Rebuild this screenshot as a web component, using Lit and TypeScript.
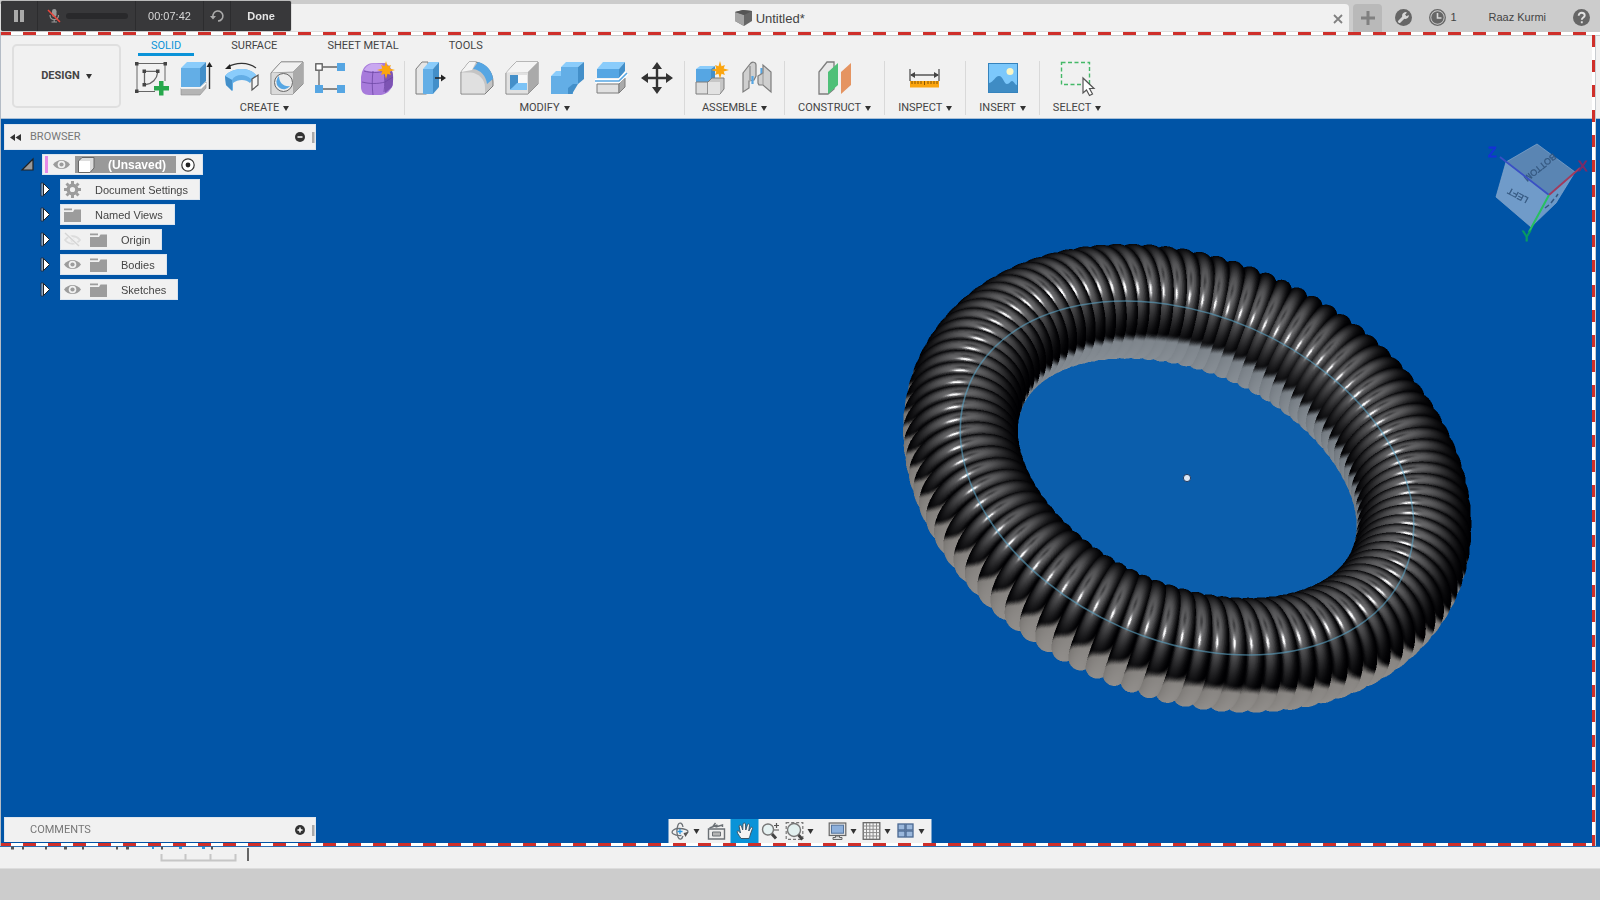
import { LitElement, html, css, svg } from "lit";
import { customElement } from "lit/decorators.js";
import { classMap } from "lit/directives/class-map.js";

const TILT_COS = 0.688;
const TILT_SIN = 0.726;
const AXIS = (23.6 * Math.PI) / 180;
const RING_RADIUS = 237;
const SCENE_W = 600;
const SCENE_H = 500;

const smooth = (lo: number, hi: number, v: number) => {
  const t = Math.min(1, Math.max(0, (v - lo) / (hi - lo)));
  return t * t * (3 - 2 * t);
};

/* A helical coil swept round a circle, drawn with a depth buffer. */
@customElement("coil-model")
export class CoilModel extends LitElement {
  static styles = css`
    :host { display: block; position: relative; width: 600px; height: 500px; }
    canvas { display: block; width: 100%; height: 100%; }
    svg { position: absolute; inset: 0; width: 100%; height: 100%; }
    .disc { z-index: -1; }
  `;

  firstUpdated() {
    const canvas = this.renderRoot.querySelector("canvas") as HTMLCanvasElement;
    const ctx = canvas.getContext("2d")!;
    const SS = 2;
    const W = SCENE_W * SS;
    const H = SCENE_H * SS;
    const depth = new Float32Array(W * H).fill(-1e9);
    const rgb = new Uint8ClampedArray(W * H * 3);
    const ux = Math.cos(AXIS), uy = Math.sin(AXIS);
    const mx = -Math.sin(AXIS), my = Math.cos(AXIS);
    const vx = TILT_COS * mx, vy = TILT_COS * my, vz = TILT_SIN;
    const nx = -TILT_SIN * mx, ny = -TILT_SIN * my, nz = TILT_COS;
    const TURNS = 94, PHI = 520, PSI = 90;
    const total = TURNS * PHI;
    for (let i = 0; i < total; i++) {
      const tau = (i / total) * 2 * Math.PI;
      const phi = ((i % PHI) / PHI) * 2 * Math.PI;
      const th = tau + 0.04 * Math.sin(tau - Math.PI / 2);
      const c = Math.cos(th), s = Math.sin(th);
      const ex = c * ux + s * vx, ey = c * uy + s * vy, ez = s * vz;
      const tx = -s * ux + c * vx, ty = -s * uy + c * vy, tz = c * vz;
      const cp = Math.cos(phi), sp = Math.sin(phi);
      const wx = cp * ex + sp * nx, wy = cp * ey + sp * ny, wz = cp * ez + sp * nz;
      const wire = 10.4 * (1 + 0.04 * s);
      const tube = 57 - wire;
      const px = RING_RADIUS * ex + tube * wx;
      const py = RING_RADIUS * ey + tube * wy;
      const pz = RING_RADIUS * ez + tube * wz;
      for (let j = 0; j < PSI; j++) {
        const psi = (j / PSI) * 2 * Math.PI;
        const a = Math.cos(psi), b = Math.sin(psi);
        if (a < -0.2) continue;
        const qz = a * wz + b * tz;
        if (qz <= -0.02) continue;
        const qx = a * wx + b * tx, qy = a * wy + b * ty;
        const X = Math.floor((px + wire * qx + SCENE_W / 2) * SS);
        const Y = Math.floor((py + wire * qy + SCENE_H / 2) * SS);
        const Z = pz + wire * qz;
        if (X < 0 || Y < 0 || X >= W - 1 || Y >= H - 1) continue;
        const p0 = Y * W + X;
        if (Z <= depth[p0] && Z <= depth[p0 + 1] && Z <= depth[p0 + W] && Z <= depth[p0 + W + 1]) continue;
        const d = Math.max(0, -0.04 * qx - 0.4 * qy + 0.915 * qz);
        const core = Math.max(0, -0.02 * qx - 0.5 * qy + 0.866 * qz);
        const h = Math.max(0, -0.1 * qx - 0.2 * qy + 0.975 * qz);
        const groove = smooth(0.5, 0.82, a);
        const soft = 112 * Math.pow(d, 4) * (0.1 + 0.9 * groove) - 46 * Math.pow(core, 110) + 190 * Math.pow(h, 190);
        const under = smooth(-0.02, 0.16, -0.24 * qx + 0.8 * qy - 0.5 * qz);
        const glow = 116 + 26 * qy;
        const tint = s < 0 ? 7 : -3;
        const base = Math.max(0, soft);
        const r = base * (1 - under) + under * (glow - tint);
        const g = base * (1 - under) + under * glow;
        const bl = (base + 2) * (1 - under) + under * (glow + tint);
        for (const p of [p0, p0 + 1, p0 + W, p0 + W + 1]) {
          if (Z > depth[p]) {
            depth[p] = Z;
            rgb[p * 3] = r;
            rgb[p * 3 + 1] = g;
            rgb[p * 3 + 2] = bl;
          }
        }
      }
    }
    const out = ctx.createImageData(SCENE_W, SCENE_H);
    for (let y = 0; y < SCENE_H; y++) {
      for (let x = 0; x < SCENE_W; x++) {
        let r = 0, g = 0, b = 0, n = 0;
        for (let k = 0; k < 4; k++) {
          const p = (y * SS + (k >> 1)) * W + x * SS + (k & 1);
          if (depth[p] > -1e8) {
            r += rgb[p * 3];
            g += rgb[p * 3 + 1];
            b += rgb[p * 3 + 2];
            n++;
          }
        }
        if (n) {
          const o = (y * SCENE_W + x) * 4;
          out.data[o] = r / n;
          out.data[o + 1] = g / n;
          out.data[o + 2] = b / n;
          out.data[o + 3] = (255 * n) / 4;
        }
      }
    }
    ctx.putImageData(out, 0, 0);
  }

  render() {
    return html`
      <svg class="disc" viewBox="-300 -250 600 500">
        <ellipse rx="237" ry="163" transform="rotate(23.6)" fill="#0b5eac"></ellipse>
      </svg>
      <canvas width=${SCENE_W} height=${SCENE_H} role="img" aria-label="Coil"></canvas>
      <svg viewBox="-300 -250 600 500">
        <ellipse rx="237" ry="163" transform="rotate(23.6)" fill="none" stroke="#5ba3c4" stroke-opacity=".6" stroke-width="1.6"></ellipse>
        <circle r="3.6" fill="#dbe7f5" stroke="#243c60" stroke-width="1"></circle>
      </svg>
    `;
  }
}

const star = (x: number, y: number) => {
  const pts: string[] = [];
  for (let i = 0; i < 16; i++) {
    const r = i % 2 ? 4 : i % 4 ? 7 : 9;
    const a = (i * Math.PI) / 8;
    pts.push(`${(x + r * Math.sin(a)).toFixed(1)},${(y - r * Math.cos(a)).toFixed(1)}`);
  }
  return svg`<polygon points=${pts.join(" ")} fill="#fba50f"/>`;
};

const G = "#7d7d7d";

const icons: Record<string, unknown> = {
  sketch: svg`<path d="M2 3.500V30M2 2.500H30V20M2 30.500H20" fill="none" stroke="#666" stroke-width="1"/>
    <g fill="#444"><rect x="0" y="1" width="3.500" height="3.500"/><rect x="28.500" y="1" width="3.500" height="3.500"/><rect x="0" y="28.500" width="3.500" height="3.500"/><rect x="7.500" y="8.500" width="3.500" height="3.500"/><rect x="21" y="8.500" width="3.500" height="3.500"/><rect x="7.500" y="22" width="3.500" height="3.500"/></g>
    <path d="M9.500 12v10M11 10.300h10M22.500 12C22 18 17 23 11 23.500" fill="none" stroke="#666" stroke-width="1.300"/>
    <path d="M24 20h4.500v5H34v4.500h-5.500v5H24v-5h-5V25h5z" fill="#27a84c"/>`,
  extrude: svg`<path d="M1 27h20l5-6v6l-6 7H1z" fill="#b5b5b5" stroke="#8d8d8d" stroke-width=".6"/><path d="M1 27h20l5-5" fill="none" stroke="#fff" stroke-width="1.400"/>
    <path d="M1 7h19v19H1z" fill="#63aee6"/><path d="M1 7l6-6h19l-6 6z" fill="#8accfb"/><path d="M20 7l6-6v19l-6 6z" fill="#438fc9"/>
    <path d="M29.500 28V4" stroke="#333" stroke-width="1.400"/><path d="M29.500 1l3 5h-6z" fill="#222"/>`,
  revolve: svg`<path d="M0 15C8 6 24 6 31 14l-6 8c-4-4-12-4-17 0v8L1 24z" fill="#63aee6"/><path d="M0 15C8 6 24 6 31 14l-5 4C20 12 10 13 7 19z" fill="#8accfb"/><path d="M7 19v11l-6-6-1-9z" fill="#438fc9"/><path d="M27 18l6-4v10l-6 5z" fill="#f5f5f5" stroke="#555" stroke-width="1.200"/>
    <path d="M3 6C11 1 23 1 31 7" fill="none" stroke="#333" stroke-width="1.200"/><path d="M0 8l5-5 1 5z" fill="#222"/>`,
  hole: svg`<path d="M1 12L11 1h22v22L23 33H1z" fill="#c9c9c9" stroke="${G}"/><path d="M1 12L11 1h22L23 11z" fill="#f1f1f1" stroke="${G}" stroke-width=".6"/><path d="M23 11L33 1v22L23 33z" fill="#aaa"/><path d="M1.500 12H23v21H1.500z" fill="#dadada"/>
    <circle cx="13.500" cy="21.500" r="9" fill="#ececec" stroke="#666"/><path d="M9 15c0 7 5 11 11 10a7.500 7.500 0 1 1-11-10z" fill="#56a6e3"/>`,
  pattern: svg`<path d="M8 6h14M4 10v14M8 28h14" stroke="#666" stroke-width="1.300"/><rect x=".8" y="2.800" width="6.400" height="6.400" fill="#fff" stroke="#555" stroke-width="1.300"/><g fill="#56a6e3"><rect x="22" y="2" width="8" height="8"/><rect x="0" y="24" width="8" height="8"/><rect x="22" y="24" width="8" height="8"/></g>`,
  form: svg`<path d="M2 11C4 5 8 2 14 2h11c5 2 8 8 8 14v8c-3 6-6 9-12 10H9c-5 0-8-3-8-8V16z" fill="#a77bdb"/><path d="M4 9C8 2 14 2 22 3l3 6c-6 2-15 2-21 0z" fill="#c9a8f0"/><path d="M25 13l7-3c2 5 1 12 0 16l-7 6z" fill="#7d54b3"/><path d="M2 21c8 2 16 2 23 0l8-5M13 10c-1 8-1 16 0 24M24 10c1 7 1 14 0 21M4 10c7 2 14 2 20 0" fill="none" stroke="#6d48a4" stroke-width=".8"/>${star(26, 9)}`,
  press: svg`<path d="M1 8l6-7h6v31l-2 1H1z" fill="#e6e6e6" stroke="${G}"/><path d="M8 8h10v25H8z" fill="#63aee6"/><path d="M8 8l6-7h10l-6 7z" fill="#8accfb"/><path d="M18 8l6-7v25l-6 7z" fill="#438fc9"/><path d="M20 17h8" stroke="#222" stroke-width="1.500"/><path d="M31 17l-5-3.500v7z" fill="#222"/>`,
  fillet: svg`<path d="M1 33V11L9 1h7c10 2 17 10 17 20v4l-8 8z" fill="#c4c4c4" stroke="${G}"/><path d="M1.500 32.500V11.500H11c8 1 14 7 14 15v6z" fill="#e0e0e0"/><path d="M1 11L9 1h7l-4 8z" fill="#f4f4f4"/><path d="M13 8l5-7c9 2 14 9 15 17l-6 5C26 15 21 9 13 8z" fill="#56a6e3"/>`,
  shell: svg`<path d="M1 12L11 1h22v22L23 33H1z" fill="#c9c9c9" stroke="${G}"/><path d="M1 12L11 1h22L23 11z" fill="#f4f4f4"/><path d="M23 11L33 1v22L23 33z" fill="#aaa"/><path d="M1.500 11.500H23v21H1.500z" fill="#e1e1e1"/><path d="M5 14h17v15H5z" fill="#f8f8f8"/><path d="M5 14h8v9l-8 6z" fill="#438fc9"/><path d="M5 29l7-7h10v7z" fill="#7cc3f6"/>`,
  combine: svg`<path d="M1 15h10V6h17v17H23v10H1z" fill="#63aee6"/><path d="M11 6l5-5h18l-6 5zM1 15l5-5h5v5z" fill="#8accfb"/><path d="M28 6l6-5v17l-6 5zM18 33v-6l5-4h5l-6 10z" fill="#438fc9"/>`,
  split: svg`<path d="M2 8h22v9H2z" fill="#56a6e3"/><path d="M2 8l6-7h22l-6 7z" fill="#8accfb"/><path d="M24 8l6-7v9l-6 7z" fill="#438fc9"/><path d="M2 23h22v9H2z" fill="#e1e1e1" stroke="${G}"/><path d="M24 23l6-6v9l-6 6z" fill="#aaa" stroke="${G}"/><path d="M0 20h24l8-8" fill="none" stroke="#fff" stroke-width="4"/><path d="M0 20h24l8-8" fill="none" stroke="#56a6e3" stroke-width="1.600"/>`,
  move: svg`<path d="M17 5v24M5 17h24" stroke="#333" stroke-width="2.400"/><path d="M17 1l5 7H12zM17 33l5-7H12zM1 17l7-5v10zM33 17l-7-5v10z" fill="#333"/>`,
  component: svg`<path d="M1 8h15v13H1z" fill="#56a6e3"/><path d="M1 8l4-3h15l-4 3z" fill="#8accfb"/><path d="M16 8l4-3v13l-4 3z" fill="#438fc9"/><path d="M1 21h12v12H1z" fill="#ddd" stroke="${G}"/><path d="M13 21l4-4h12v11l-4 5H13z" fill="#c6c6c6" stroke="${G}"/><path d="M13 21h12v12H13z" fill="#e2e2e2"/>${star(25, 9)}`,
  joint: svg`<path d="M3 12l7-9c2-3 6-2 6 1v11l-2 4-5 1v7l-6 4z" fill="#cfcfcf" stroke="${G}" stroke-width="1.200"/><path d="M10 5v15" stroke="#a5a5a5" stroke-width="2"/><path d="M12.500 15v8M21.500 7v6" stroke="#56a6e3" stroke-width="2.200"/><path d="M18 15l5-3V4l8 7v20l-8-7h-4l-1-2z" fill="#cfcfcf" stroke="${G}" stroke-width="1.200"/><path d="M23 12v12" stroke="#999"/>`,
  plane: svg`<path d="M1 11l8-10h7v27l-6 5H1z" fill="#e8e8e8" stroke="${G}" stroke-width="1.300"/><path d="M10 11L20 2v22l-10 9z" fill="#4fc078"/><path d="M23 11l10-9v22l-10 9z" fill="#e59461"/>`,
  measure: svg`<path d="M2 8v12M31 8v12M3 14h27" stroke="#555" stroke-width="1.300"/><path d="M2 14l5-3v6zM31 14l-5-3v6z" fill="#444"/><rect x="2" y="20" width="29" height="6.500" fill="#fba50f"/><path d="M4 20v3M7 20v3M10 20v3M13 20v3M16.500 20v4M20 20v3M23 20v3M26 20v3M29 20v3" stroke="#855400" stroke-width="1"/>`,
  picture: svg`<rect x="2.500" y="2.500" width="29" height="29" fill="#7cc8fb" stroke="#3583bd"/><circle cx="24" cy="10.500" r="3.500" fill="#fbf6c4"/><path d="M3 22c5-1 6-7 10-7s5 8 8 8 3-3 5-3 3 4 5 4v7H3z" fill="#3f8cc4"/>`,
  select: svg`<rect x="1.500" y="1.500" width="28" height="22" fill="none" stroke="#45b968" stroke-width="1.400" stroke-dasharray="4 2.500"/><path d="M23 17v15l3.500-3 3 5.500 3-1.500-3-5.500h4.500z" fill="#fff" stroke="#555" stroke-width="1.200"/>`,
};

const navIcons: Record<string, unknown> = {
  orbit: svg`<g fill="none" stroke="#6b7075" stroke-width="1.300"><path d="M10 13.500C3 14-2 11 2 8c1-1 3-1.500 5-1.500 6 0 11 1.500 9 4-1 1-2 1.500-3 1.700"/><path d="M11.500 5C11 1 8-.5 6.500 3c-1.500 4-1.500 8 0 12 1.500 3.500 4 2.500 5-1"/></g><path d="M8.500 7v5M6 9.500h5" stroke="#2997e0" stroke-width="1.300"/><path d="M12 11l5-1-3 5z" fill="#555"/>`,
  look: svg`<path d="M1 7h16v10H1z" fill="#eee" stroke="#6b7075" stroke-width="1.400"/><path d="M5 10h8v4H5z" fill="#b4b4b4" stroke="#6b7075"/><path d="M2 6l8-3M8 5l7-2v2M5 5l3-4" stroke="#6b7075" stroke-width="1.400" fill="none"/>`,
  pan: svg`<path d="M5.500 16.500C4 14 2 12 1.500 9.500c1-1 2-.5 3.500 1.500L3.500 4c.5-1.500 2-1 2.500 0l1.200 4L7.500 2c.5-1.500 2-1.500 2.500 0l.3 6L12 2.500c.8-1 2-.7 2 .7L13.300 9l2-3.500c1-.8 2-.1 1.700 1L15 12c-.5 2-1 3-1.500 4.500z" fill="#f4f4f4" stroke="#39576a" stroke-width="1"/>`,
  zoom: svg`<circle cx="6.500" cy="7.500" r="5.500" fill="#e6f2f2" stroke="#777" stroke-width="1.400"/><path d="M10.500 12l4 4.500" stroke="#444" stroke-width="3"/><path d="M15 1v5M12.500 3.500h5M12.500 8h5" stroke="#555" stroke-width="1.200"/>`,
  fit: svg`<rect x=".7" y=".7" width="16.600" height="16.600" fill="none" stroke="#777" stroke-width="1.200" stroke-dasharray="3 2"/><circle cx="8.500" cy="8" r="6.500" fill="#e2f0ef" stroke="#777" stroke-width="1.400"/><path d="M13 13l4 4.500" stroke="#444" stroke-width="3"/>`,
  display: svg`<rect x=".7" y="1" width="16.600" height="12.500" fill="#e3e3e3" stroke="#666" stroke-width="1.200"/><rect x="3" y="3.200" width="12" height="8" fill="#8db0dc" stroke="#55759f"/><path d="M7 14h4v1.500h2.500v2h-9v-2H7z" fill="#ddd" stroke="#666"/>`,
  grid: svg`<rect x=".7" y=".7" width="16.600" height="16.600" fill="#f4f4f4" stroke="#666" stroke-width="1.300"/><path d="M4 1v16M7.300 1v16M10.600 1v16M14 1v16M1 4h16M1 7.300h16M1 10.600h16M1 14h16" stroke="#8b8b8b" stroke-width="1"/>`,
  views: svg`<g fill="#9bb8dc" stroke="#496791" stroke-width="1.300"><rect x="1.500" y="2" width="7" height="6"/><rect x="9.500" y="2" width="7" height="6"/><rect x="1.500" y="9" width="7" height="6"/><rect x="9.500" y="9" width="7" height="6"/></g>`,
};

const folder = svg`<path d="M0 1.500h8v1.800H0zM0 5h9l1.500-2.500H17V15H0z" fill="#9c9c9c"/>`;
const eye = svg`<path d="M0 7.500C4 1.500 13 1.500 17 7.500c-4 6-13 6-17 0z" fill="#9c9c9c"/><circle cx="8.500" cy="7.500" r="3.800" fill="#f1f1f1"/><circle cx="8.500" cy="7.500" r="2.100" fill="#9c9c9c"/>`;
const eyeOff = svg`<path d="M1 8c4-5 11-5 15 0-4 5-11 5-15 0z" fill="none" stroke="#dcdcdc" stroke-width="1.800"/><circle cx="8.500" cy="8" r="2" fill="#dcdcdc"/><path d="M2 1l13 13" stroke="#f1f1f1" stroke-width="3"/><path d="M1 1l14 13" stroke="#d4d4d4" stroke-width="1.400"/>`;
const gear = svg`<circle cx="8.500" cy="7.500" r="4.300" fill="none" stroke="#9c9c9c" stroke-width="3.400"/><path d="M8.500-1v3M8.500 13v3M0 7.500h3M14 7.500h3M2.500 1.500l2 2M12.500 11.500l2 2M14.500 1.500l-2 2M4.500 11.500l-2 2" stroke="#9c9c9c" stroke-width="3"/>`;

const groups = [
  { label: "CREATE", tools: ["sketch", "extrude", "revolve", "hole", "pattern", "form"] },
  { label: "MODIFY", tools: ["press", "fillet", "shell", "combine", "split", "move"] },
  { label: "ASSEMBLE", tools: ["component", "joint"] },
  { label: "CONSTRUCT", tools: ["plane"] },
  { label: "INSPECT", tools: ["measure"] },
  { label: "INSERT", tools: ["picture"] },
  { label: "SELECT", tools: ["select"] },
];

const rows = [
  { name: "Document Settings", icons: [gear] },
  { name: "Named Views", icons: [folder] },
  { name: "Origin", icons: [eyeOff, folder] },
  { name: "Bodies", icons: [eye, folder] },
  { name: "Sketches", icons: [eye, folder] },
];

const nav = [
  { id: "orbit", menu: true },
  { id: "look", menu: false },
  { id: "pan", menu: false },
  { id: "zoom", menu: false },
  { id: "fit", menu: true },
  { id: "display", menu: true },
  { id: "grid", menu: true },
  { id: "views", menu: true },
];

@customElement("app-root")
export class AppRoot extends LitElement {
  static styles = css`
    * { box-sizing: border-box; }
    :host {
      display: flex; flex-direction: column; min-height: 100vh; position: relative;
      background: #ccc; color: #444; font-family: "Liberation Sans", Arial, sans-serif; font-size: 11px; line-height: 16px;
    }
    button { font: inherit; color: inherit; background: none; border: 0; padding: 0; margin: 0; display: flex; align-items: center; justify-content: center; }
    svg { display: block; flex: none; overflow: visible; }
    .caret { width: 0; height: 0; border: 3px solid transparent; border-top: 5px solid #333; border-bottom: 0; margin-left: 4px; }

    .titlebar { display: flex; align-items: flex-end; height: 32px; padding-top: 4px; }
    .doc { flex: 1; display: flex; align-items: center; height: 28px; background: #f1f1f1; border-radius: 0 4px 0 0; border-bottom: 1px solid #ddd; padding: 2px 6px 0 206px; }
    .doc-name { flex: 1; display: flex; align-items: center; justify-content: center; gap: 3px; font-size: 13px; }
    .add { width: 29px; height: 28px; margin-left: 4px; background: #b9b9b9; border-radius: 4px 4px 0 0; }
    .account { display: flex; align-items: center; height: 28px; padding: 0 10px 2px 13px; }
    .jobs { gap: 4px; margin: 0 32px 0 17px; }
    .user { margin-right: 27px; }

    .recorder { position: absolute; left: 1px; top: 1px; z-index: 5; display: flex; height: 30px; background: #38383a; border-radius: 2px; color: #d8d8d8; box-shadow: 0 0 1px #222; }
    .recorder > * { height: 30px; border-right: 1px solid #2c2c2e; }
    .recorder > :last-child { border-right: 0; }
    .pause { width: 37px; }
    .mic { display: flex; align-items: center; gap: 5px; width: 98px; padding-left: 9px; }
    .level { width: 62px; height: 6px; border-radius: 3px; background: #29292b; }
    .time { display: flex; align-items: center; justify-content: center; width: 68px; }
    .again { width: 27px; }
    .done { width: 60px; font-weight: bold; color: #e4e4e4; }

    .captured { flex: 1; display: flex; flex-direction: column; position: relative; padding-top: 3px; background: #fff; }
    .frame { position: absolute; inset: 0 4px 0 0; pointer-events: none; z-index: 4; border-left: 1px solid #b4bcc6; }
    .dash-x, .dash-y { position: absolute; background-color: #fff; }
    .dash-x { left: 0; right: 0; height: 3px; background-image: repeating-linear-gradient(90deg, #cf2f2a 0 10px, #fff 10px 22px, #cf2f2a 22px 25px); }
    .dash-y { top: 3px; bottom: 0; right: 0; width: 4px; background-image: repeating-linear-gradient(180deg, #cf2f2a 0 12px, #fff 12px 25px); border-right: 1px solid #c8ccd0; }
    .dash-x.top { top: 0; }
    .dash-x.bottom { bottom: 0; }

    .toolbar { display: flex; background: #f1f1f1; border-top: 1px solid #c9c9c9; border-bottom: 1px solid #a9c0d8; height: 84px; padding-left: 12px; font-family: Roboto, "Liberation Sans", sans-serif; }
    .workspace { width: 109px; height: 64px; margin: 8px 4px 0 0; border: 2px solid #dfdfdf; border-radius: 5px; font-weight: bold; }
    .workspace .caret { margin-left: 6px; }
    .ribbon { display: flex; flex-direction: column; }
    .tabs { display: flex; gap: 24px; padding-left: 13px; }
    .tab { height: 20px; padding: 2px 13px 0; border-bottom: 3px solid transparent; }
    .tab.active { color: #0a93d8; border-color: #0a93d8; }
    .groups { display: flex; padding-top: 4px; }
    .group { position: relative; padding: 0 11px 0 10px; }
    .group:not(:last-child)::after { content: ""; position: absolute; right: 0; top: 1px; width: 1px; height: 54px; background: #d9d9d9; }
    .tools { display: flex; justify-content: center; gap: 11px; height: 36px; align-items: center; }
    .group-name { width: 100%; height: 16px; padding: 0 3px; margin-top: 4px; }

    .viewport { flex: 1; position: relative; display: flex; flex-direction: column; justify-content: space-between; background: #0054a6; padding: 5px 4px 3px; z-index: 0; border-bottom: 1px solid #0054a6; }
    .model { position: absolute; right: 113px; top: 109px; z-index: -1; }
    .cube { position: absolute; right: 6px; top: 18px; }
    .panel { display: flex; align-items: center; width: 312px; height: 26px; background: #f1f1f1; border: 1px solid #dfe6ee; font-family: Roboto, "Liberation Sans", sans-serif; color: #777; }
    .panel .fold { width: 25px; padding-right: 5px; }
    .panel .title { flex: 1; }
    .panel .grip { width: 3px; height: 11px; border-left: 2px solid #aaa; border-right: 1px solid #ccc; margin: 0 0 0 7px; }
    .tree { display: flex; flex-direction: column; align-items: flex-start; gap: 4px; margin: 0; padding: 4px 0 0 18px; list-style: none; }
    .node { display: flex; align-items: center; gap: 7px; }
    .node.child { padding-left: 18px; gap: 10px; }
    .node.root { gap: 8px; }
    .cell { display: flex; align-items: center; height: 21px; gap: 9px; padding: 0 11px 0 3px; background: #f1f1f1; border: 1px solid #dbe4ee; }
    .cell .text { padding-left: 5px; }
    .cell.top { gap: 5px; padding: 0 7px 0 2px; }
    .mark { width: 3px; height: 17px; background: #e58ae8; }
    .unsaved { display: flex; align-items: center; gap: 13px; height: 17px; padding: 0 10px 0 3px; background: #999; color: #fff; font-weight: bold; font-size: 12px; }
    .foot { display: flex; align-items: flex-end; }
    .foot .panel { flex: none; height: 25px; border-bottom: 0; }
    .nav { display: flex; align-items: stretch; height: 24px; background: #f1f1f1; position: absolute; left: 50%; bottom: 2px; transform: translateX(-50%); padding: 0 4px 0 0; }
    .nav button { padding: 0 3px; }
    .nav .look { padding: 0 5px; }
    .nav .active { background: #0a93d8; padding: 0 5px; }
    .nav .display { margin-left: 9px; }

    .timeline { display: flex; align-items: flex-start; height: 23px; padding: 1px 0 0 12px; border-top: 1px solid #2a70b4; background: #f1f1f1; border-bottom: 1px solid #ddd; }
    .status { height: 31px; background: #ccc; }
  `;

  render() {
    return html`
      <header class="titlebar">
        <div class="doc">
          <div class="doc-name">
            <svg width="18" height="17" viewBox="0 0 18 17"><path d="M0 2l8-2 9 1v10l-8 5-9-5z" fill="#666"/><path d="M0 2l9 3v11l-9-5z" fill="#a4a4a4"/><path d="M0 2l8-2 9 1-8 4z" fill="#555"/></svg>
            <span>Untitled*</span>
          </div>
          <button aria-label="Close document"><svg width="10" height="10" viewBox="0 0 10 10"><path d="M1 1l8 8M9 1L1 9" stroke="#808080" stroke-width="1.800"/></svg></button>
        </div>
        <button class="add" aria-label="New document"><svg width="14" height="14" viewBox="0 0 14 14"><path d="M7 0v14M0 7h14" stroke="#808080" stroke-width="3"/></svg></button>
        <div class="account">
          <button aria-label="Extensions"><svg width="17" height="17" viewBox="0 0 17 17"><circle cx="8.500" cy="8.500" r="8.500" fill="#666"/><path d="M4.500 12.500l5-5" stroke="#d6d6d6" stroke-width="3" stroke-linecap="round"/><path d="M12 3.500A3.400 3.400 0 1 0 13.800 6l-2.300 1.300-1.500-1.500z" fill="#d6d6d6"/></svg></button>
          <button class="jobs" aria-label="Job status"><svg width="17" height="17" viewBox="0 0 17 17"><circle cx="8.500" cy="8.500" r="7.800" fill="none" stroke="#666" stroke-width="1.300"/><circle cx="8.500" cy="8.500" r="6.200" fill="#666"/><path d="M8.500 4v5h4" fill="none" stroke="#d6d6d6" stroke-width="1.600"/></svg><span>1</span></button>
          <button class="user">Raaz Kurmi</button>
          <button aria-label="Help"><svg width="17" height="17" viewBox="0 0 17 17"><circle cx="8.500" cy="8.500" r="8.500" fill="#666"/><path d="M5.700 6.700c0-4 6-3.700 6-.2 0 2-2.900 2.200-2.900 4.300M8.800 12.300v2" fill="none" stroke="#e0e0e0" stroke-width="1.900"/></svg></button>
        </div>
      </header>

      <div class="recorder">
        <button class="pause" aria-label="Pause"><svg width="10" height="12" viewBox="0 0 10 12"><path d="M0 0h4v12H0zM6 0h4v12H6z" fill="#aaa"/></svg></button>
        <div class="mic">
          <svg width="14" height="14" viewBox="0 0 14 14"><rect x="5" y="0" width="4.500" height="8" rx="2.200" fill="#999"/><path d="M3 6c0 6 8.500 6 8.500 0M7.200 10.500V13M4.500 13h5.500" fill="none" stroke="#999" stroke-width="1.200"/><path d="M1 1l12 12" stroke="#f0443a" stroke-width="1.500"/></svg>
          <div class="level"></div>
        </div>
        <div class="time">00:07:42</div>
        <button class="again" aria-label="Restart"><svg width="13" height="12" viewBox="0 0 13 12"><path d="M2 7A5 5 0 1 1 7 11" fill="none" stroke="#aaa" stroke-width="1.600"/><path d="M-1 6h6L2 9.500z" fill="#aaa"/></svg></button>
        <button class="done">Done</button>
      </div>

      <main class="captured">
        <div class="toolbar">
          <button class="workspace">DESIGN<span class="caret"></span></button>
          <div class="ribbon">
            <div class="tabs">
              ${["SOLID", "SURFACE", "SHEET METAL", "TOOLS"].map((t, i) => html`<button class=${classMap({ tab: true, active: i === 0 })}>${t}</button>`)}
            </div>
            <div class="groups">
              ${groups.map((g) => html`
                <div class="group">
                  <div class="tools">
                    ${g.tools.map((t) => html`<button aria-label=${t}><svg width="34" height="34" viewBox="0 0 34 34">${icons[t]}</svg></button>`)}
                  </div>
                  <button class="group-name">${g.label}<span class="caret"></span></button>
                </div>`)}
            </div>
          </div>
        </div>

        <section class="viewport">
          <coil-model class="model"></coil-model>
          <svg class="cube" width="110" height="110" viewBox="1484 137 110 110">
            <path d="M1537 144l38 28-26 23-43-33z" fill="#5a85b3"/>
            <path d="M1506 162l43 33-18 32-35-30z" fill="#709bc9"/>
            <path d="M1549 195l26-23-19 31-25 24z" fill="#6b99c8"/>
            <path d="M1537 144l38 28-19 31-25 24-35-30 10-35z" fill="none" stroke="#86a8cc" stroke-width=".7"/>
            <text transform="translate(1553 153) rotate(141)" font-size="9" fill="#34577f" stroke="#34577f" stroke-width=".3">BOTTOM</text>
            <text transform="translate(1529 198) rotate(208)" font-size="9" fill="#34577f" stroke="#34577f" stroke-width=".3">LEFT</text>
            <path d="M1545 208l4-3M1551 203l3-4M1556 197l2-3" stroke="#34577f" stroke-width="1.500"/>
            <path d="M1500 157l49 38" stroke="#3a50c4" stroke-width="1.800"/>
            <path d="M1549 195l31-27" stroke="#a33a5c" stroke-width="1.800"/>
            <path d="M1549 195l-20 37" stroke="#28c060" stroke-width="2"/>
            <text x="1488" y="157" font-size="14" fill="#1531d8" stroke="#1531d8" stroke-width=".8">Z</text>
            <text x="1578" y="171" font-size="14" fill="#7d2b66" stroke="#7d2b66" stroke-width=".8">X</text>
            <text x="1522" y="241" font-size="14" fill="#089c62" stroke="#089c62" stroke-width=".8">Y</text>
          </svg>
          <div>
            <div class="panel">
              <button class="fold" aria-label="Collapse browser"><svg width="11" height="7" viewBox="0 0 11 7"><path d="M5 0v7L0 3.500zM11 0v7L5.500 3.500z" fill="#333"/></svg></button>
              <span class="title">BROWSER</span>
              <button aria-label="Minimise"><svg width="10" height="10" viewBox="0 0 10 10"><circle cx="5" cy="5" r="5" fill="#333"/><path d="M2.500 5h5" stroke="#fff" stroke-width="1.500"/></svg></button>
              <span class="grip"></span>
            </div>
            <ul class="tree">
              <li class="node root">
                <svg width="12" height="12" viewBox="0 0 12 12"><path d="M11 0v11H0z" fill="#999" stroke="#222" stroke-width="1.200"/></svg>
                <div class="cell top">
                  <span class="mark"></span>
                  <svg width="17" height="15" viewBox="0 0 17 15">${eye}</svg>
                  <div class="unsaved">
                    <svg width="17" height="16" viewBox="0 0 17 16"><path d="M.5 4L4 .5h12V11l-4 4.500H.500z" fill="#ddd" stroke="#666"/><path d="M1 4h11v11H1z" fill="#fff"/></svg>
                    <span>(Unsaved)</span>
                  </div>
                  <svg width="14" height="14" viewBox="0 0 14 14"><circle cx="7" cy="7" r="6.200" fill="#fff" stroke="#333" stroke-width="1.200"/><circle cx="7" cy="7" r="2.400" fill="#222"/></svg>
                </div>
              </li>
              ${rows.map((r) => html`
                <li class="node child">
                  <svg width="10" height="13" viewBox="0 0 10 13"><path d="M1 0h2.500v13H1z" fill="#8ca3bd" stroke="#1e2c40" stroke-width=".8"/><path d="M3.500.5l6 6-6 6z" fill="#fff" stroke="#222"/></svg>
                  <div class="cell">
                    ${r.icons.map((i) => html`<svg width="17" height="15" viewBox="0 0 17 15">${i}</svg>`)}
                    <span class="text">${r.name}</span>
                  </div>
                </li>`)}
            </ul>
          </div>
          <div class="foot">
            <div class="panel">
              <span class="fold"></span>
              <span class="title">COMMENTS</span>
              <button aria-label="Add comment"><svg width="10" height="10" viewBox="0 0 10 10"><circle cx="5" cy="5" r="5" fill="#333"/><path d="M2.500 5h5M5 2.500v5" stroke="#fff" stroke-width="1.500"/></svg></button>
              <span class="grip"></span>
            </div>
            <div class="nav">
              ${nav.map((n) => html`<button class=${classMap({ active: n.id === "pan", [n.id]: true })} aria-label=${n.id}>
                <svg width="18" height="18" viewBox="0 0 18 18">${navIcons[n.id]}</svg>${n.menu ? html`<span class="caret"></span>` : ""}
              </button>`)}
            </div>
          </div>
        </section>
        <div class="frame">
          <div class="dash-x top"></div>
          <div class="dash-x bottom"></div>
          <div class="dash-y"></div>
        </div>
      </main>

      <footer>
        <div class="timeline">
          <svg width="240" height="13" viewBox="12 847 240 13">
            <path d="M11 847h3M22 847h2M45 847h2M64 847h3M82 847h2M116 847h2M126 847h3M161 847h2M211 847h2" stroke="#555" stroke-width="3"/>
            <path d="M152 847h2M179 847h3M202 847h3" stroke="#2997e0" stroke-width="2"/>
            <path d="M161.500 853v6.500H235.500V853M185.500 853v6M210.500 853v6" fill="none" stroke="#c6c6c6" stroke-width="2"/>
            <path d="M248 847v13" stroke="#666" stroke-width="2"/>
          </svg>
        </div>
        <div class="status"></div>
      </footer>
    `;
  }
}
